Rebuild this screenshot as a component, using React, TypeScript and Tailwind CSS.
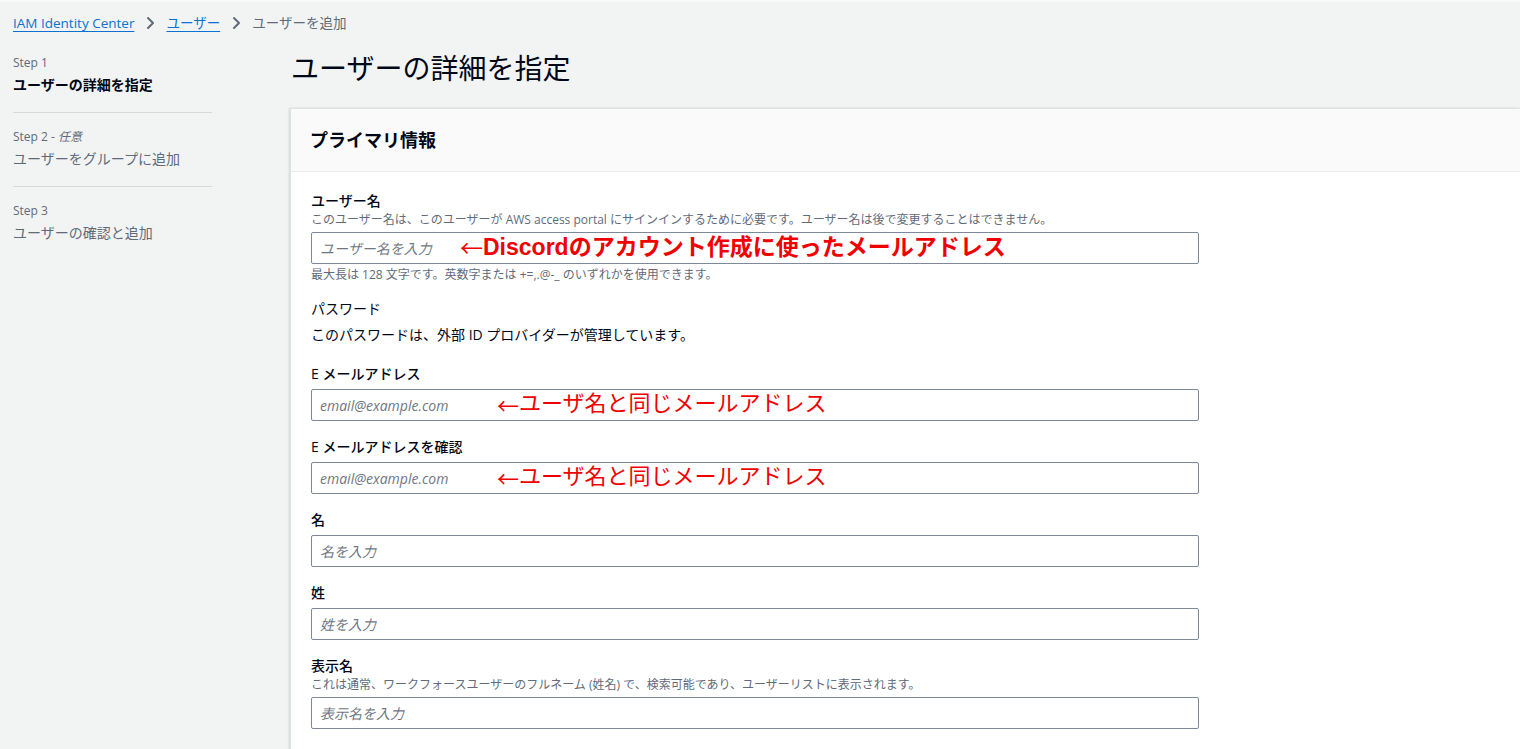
import React from "react";

const FONT = { fontFamily: '"Open Sans", "Noto Sans CJK JP", sans-serif' };

function Chevron() {
  return (
    <svg width="16" height="16" viewBox="0 0 16 16" className="mx-[8px]" fill="none">
      <path d="M6 3l5 5-5 5" stroke="#5f6b7a" strokeWidth="2" strokeLinejoin="round" strokeLinecap="round" />
    </svg>
  );
}

function Field({
  label,
  desc,
  placeholder,
  hint,
  note,
  noteLeft,
  noteBold,
  noteSize,
}: {
  label: string;
  desc?: string;
  placeholder: string;
  hint?: string;
  note?: string;
  noteLeft?: number;
  noteBold?: boolean;
  noteSize?: number;
}) {
  return (
    <div className="flex flex-col">
      <div className="text-[14px] leading-[20px] text-[#000716] font-medium">{label}</div>
      {desc && <div className="text-[12px] leading-[16px] text-[#5f6b7a] mt-[1px]">{desc}</div>}
      <div className={`relative w-[888px] ${desc ? "mt-[4px]" : "mt-[5px]"}`}>
        <input
          readOnly
          placeholder={placeholder}
          className="w-full h-[32px] border border-[#7d8998] rounded-[2px] bg-white px-[8px] text-[14px] outline-none placeholder:italic placeholder:text-[#6f7782]"
          style={FONT}
        />
        {note && (
          <div
            className={`absolute top-[-1px] h-[32px] flex items-center leading-[32px] text-[#f00000] whitespace-nowrap ${noteBold ? "font-bold" : ""}`}
            style={{ left: noteLeft, fontSize: noteSize, fontFamily: '"Liberation Sans", "Noto Sans CJK JP", sans-serif' }}
          >
            <span className="font-normal" style={{ fontFamily: '"Noto Sans CJK JP", sans-serif' }}>←</span>
            {note}
          </div>
        )}
      </div>
      {hint && <div className="text-[12px] leading-[16px] text-[#5f6b7a] mt-[3px]">{hint}</div>}
    </div>
  );
}

export default function App() {
  return (
    <div className="w-[1520px] h-[749px] overflow-hidden bg-[#f2f3f3] border-t-2 border-[#f8f9f9]" style={FONT}>
      <div className="flex items-center pl-[13px] pt-[11px] h-[31px] text-[13.5px] leading-[20px]">
        <span className="text-[#0972d3] underline underline-offset-[3px]">IAM Identity Center</span>
        <Chevron />
        <span className="text-[#0972d3] underline underline-offset-[3px]">ユーザー</span>
        <Chevron />
        <span className="text-[#5f6b7a]">ユーザーを追加</span>
      </div>
      <div className="flex mt-[17px]">
        <nav className="w-[290px] shrink-0 pl-[13px] pt-[5px]">
          <div className="w-[199px]">
            <div className="pb-[17px] border-b border-[#d5dbdb]">
              <div className="text-[12px] leading-[16px] text-[#5f6b7a]">Step 1</div>
              <div className="text-[14px] leading-[20px] mt-[4px] font-bold text-[#000716]">ユーザーの詳細を指定</div>
            </div>
            <div className="pt-[16px] pb-[17px] border-b border-[#d5dbdb]">
              <div className="text-[12px] leading-[16px] text-[#5f6b7a]">
                Step 2 - <span className="italic">任意</span>
              </div>
              <div className="text-[14px] leading-[20px] mt-[4px] text-[#5f6b7a]">ユーザーをグループに追加</div>
            </div>
            <div className="pt-[16px]">
              <div className="text-[12px] leading-[16px] text-[#5f6b7a]">Step 3</div>
              <div className="text-[14px] leading-[20px] mt-[4px] text-[#5f6b7a]">ユーザーの確認と追加</div>
            </div>
          </div>
        </nav>
        <main className="flex-1 min-w-0">
          <h1 className="pl-[1px] text-[28px] leading-[36px] text-[#000716] font-normal">ユーザーの詳細を指定</h1>
          <section className="mt-[22px] bg-white border-l border-t border-[#dfe2e2] shadow-[-1px_0_2px_rgba(0,7,22,0.12)]">
            <div className="h-[63px] bg-[#fafafa] border-b border-[#e9ebed] flex items-center pl-[19px]">
              <h2 className="text-[18px] leading-[24px] font-bold text-[#000716]">プライマリ情報</h2>
            </div>
            <div className="pl-[20px] pt-[19px] pb-[80px] flex flex-col gap-[16px]">
              <Field
                label="ユーザー名"
                desc="このユーザー名は、このユーザーが AWS access portal にサインインするために必要です。ユーザー名は後で変更することはできません。"
                placeholder="ユーザー名を入力"
                hint="最大長は 128 文字です。英数字または +=,.@-_ のいずれかを使用できます。"
                note="Discordのアカウント作成に使ったメールアドレス"
                noteLeft={149}
                noteBold
                noteSize={23}
              />
              <div className="flex flex-col pb-[3px]">
                <div className="text-[14px] leading-[20px] text-[#000716]">パスワード</div>
                <div className="text-[14px] leading-[20px] text-[#000716] mt-[6px]">このパスワードは、外部 ID プロバイダーが管理しています。</div>
              </div>
              <Field label="E メールアドレス" placeholder="email@example.com" note="ユーザ名と同じメールアドレス" noteLeft={186} noteSize={22} />
              <Field label="E メールアドレスを確認" placeholder="email@example.com" note="ユーザ名と同じメールアドレス" noteLeft={186} noteSize={22} />
              <Field label="名" placeholder="名を入力" />
              <Field label="姓" placeholder="姓を入力" />
              <Field
                label="表示名"
                desc="これは通常、ワークフォースユーザーのフルネーム (姓名) で、検索可能であり、ユーザーリストに表示されます。"
                placeholder="表示名を入力"
              />
            </div>
          </section>
        </main>
      </div>
    </div>
  );
}
